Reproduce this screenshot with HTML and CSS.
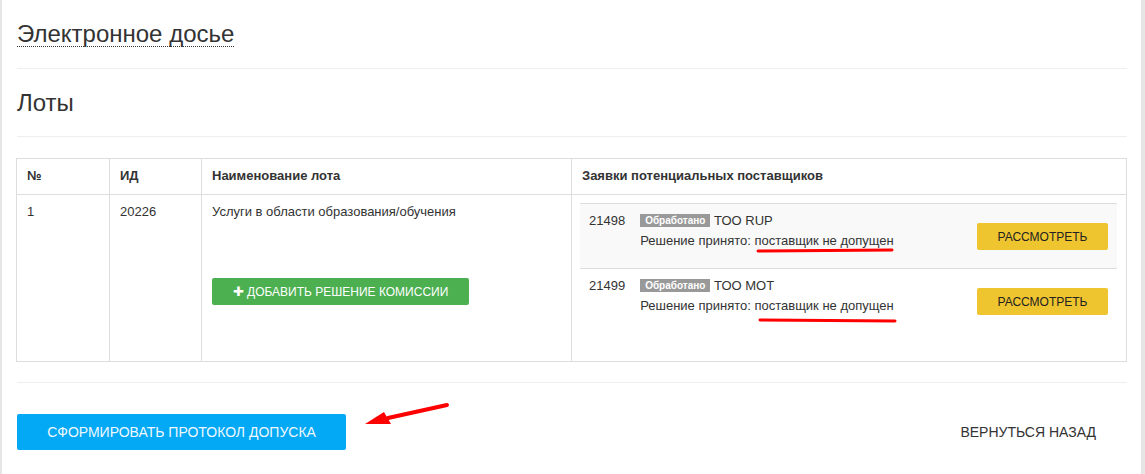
FILE: index.html
```html
<!DOCTYPE html>
<html lang="ru">
<head>
    <meta charset="UTF-8">
    <title>Электронное досье</title>
    <link rel="stylesheet" href="styles.css">
</head>
<body>
    <div class="panel">
        <h2 class="dossier-title"><span>Электронное досье</span></h2>
        <hr>
        <h2 class="section-title">Лоты</h2>
        <hr>

        <table class="lots">
            <thead>
                <tr>
                    <th class="col-num">№</th>
                    <th class="col-id">ИД</th>
                    <th class="col-name">Наименование лота</th>
                    <th>Заявки потенциальных поставщиков</th>
                </tr>
            </thead>
            <tbody>
                <tr>
                    <td>1</td>
                    <td>20226</td>
                    <td>
                        <div>Услуги в области образования/обучения</div>
                        <button class="btn btn-green"><span class="plus">✚</span> Добавить решение комиссии</button>
                    </td>
                    <td class="bids-cell">
                        <table class="bids">
                            <tr class="striped">
                                <td class="bid-id">21498</td>
                                <td class="bid-info">
                                    <span class="label">Обработано</span> ТОО RUP<br>
                                    Решение принято: поставщик не допущен
                                </td>
                                <td class="bid-action"><button class="btn btn-yellow">Рассмотреть</button></td>
                            </tr>
                            <tr>
                                <td class="bid-id">21499</td>
                                <td class="bid-info">
                                    <span class="label">Обработано</span> ТОО MOT<br>
                                    Решение принято: поставщик не допущен
                                </td>
                                <td class="bid-action"><button class="btn btn-yellow">Рассмотреть</button></td>
                            </tr>
                        </table>
                    </td>
                </tr>
            </tbody>
        </table>

        <hr>

        <div class="footer">
            <button class="btn btn-blue">Сформировать протокол допуска</button>
            <button class="btn btn-flat">Вернуться назад</button>
        </div>
    </div>

    <!-- пометки поверх скриншота -->
    <svg class="marks" width="1145" height="474" viewBox="0 0 1145 474">
        <path d="M758 251 L892 250" stroke="#f00" stroke-width="3" stroke-linecap="round" fill="none"/>
        <path d="M760 320 L895 321" stroke="#f00" stroke-width="3" stroke-linecap="round" fill="none"/>
        <path d="M447 405 L388 418" stroke="#f00" stroke-width="4" stroke-linecap="round" fill="none"/>
        <polygon points="365,424 384,412 391,424" fill="#f00"/>
    </svg>
</body>
</html>
```

FILE: styles.css
```css
body {
    margin: 0;
    background-color: #e6e6e6;
    font-family: "Liberation Sans", Arial, sans-serif;
    font-size: 13px;
    color: #333;
}

.panel {
    background-color: #fff;
    margin: 0 4px 0 2px;
    padding: 0 14px 0 14px;
    height: 474px;
    box-sizing: border-box;
    overflow: hidden;
}

hr {
    border: none;
    border-top: 1px solid #eee;
    margin: 0 0 0 1px;
}

h2 {
    font-weight: normal;
    font-size: 24px;
    line-height: 26px;
    margin: 0;
    padding-left: 1px;
}

.dossier-title {
    padding-top: 21px;
    margin-bottom: 21px;
}

.dossier-title span {
    border-bottom: 1px dotted #333;
    display: inline-block;
    line-height: 25px;
}

.section-title {
    margin: 21px 0 20px;
}

.lots {
    width: 100%;
    border-collapse: collapse;
    margin-top: 21px;
    margin-bottom: 20px;
    border: 1px solid #ddd;
}

.lots th,
.lots > tbody > tr > td {
    border: 1px solid #ddd;
    padding: 8px 10px;
    line-height: 18px;
    text-align: left;
    vertical-align: top;
}

.lots th {
    font-weight: bold;
    padding-bottom: 9px;
}

.col-num {
    width: 72px;
}

.col-id {
    width: 71px;
}

.col-name {
    width: 349px;
}

.lots > tbody > tr > td.bids-cell {
    padding: 8px 9px 28px 8px;
}

.bids {
    width: 100%;
    border-collapse: collapse;
}

.bids td {
    border-top: 1px solid #ddd;
    vertical-align: top;
    line-height: 20px;
    padding: 7px 8px 0 10px;
}

.bids .striped td {
    background-color: #f9f9f9;
}

.bids td.bid-id {
    width: 30px;
    padding: 7px 5px 0 9px;
}

.bids td.bid-action {
    text-align: right;
    padding: 19px 9px 18px 0;
}

.label {
    display: inline-block;
    background-color: #999;
    color: #fff;
    font-size: 10px;
    font-weight: bold;
    line-height: 13px;
    padding: 0 5px;
    vertical-align: 1px;
}

.btn {
    border: none;
    border-radius: 2px;
    font-family: "Liberation Sans", Arial, sans-serif;
    text-transform: uppercase;
    cursor: pointer;
}

.btn-green {
    display: block;
    margin-top: 57px;
    width: 257px;
    height: 27px;
    background-color: #4caf50;
    color: #fff;
    font-size: 12px;
    padding: 0;
}

.plus {
    font-size: 13px;
}

.btn-yellow {
    width: 131px;
    height: 27px;
    background-color: #eec52e;
    color: #222;
    font-size: 12px;
    padding: 0;
}

.footer {
    display: flex;
    justify-content: space-between;
    align-items: center;
    margin-top: 31px;
    padding-left: 1px;
}

.btn-blue {
    height: 36px;
    width: 329px;
    background-color: #03a9f4;
    color: #f0f8ff;
    font-size: 14px;
    padding: 0;
}

.btn-flat {
    background: none;
    color: #333;
    font-size: 14px;
    padding: 0 31px 0 0;
    height: 36px;
}

.marks {
    position: absolute;
    left: 0;
    top: 0;
    pointer-events: none;
}
```
